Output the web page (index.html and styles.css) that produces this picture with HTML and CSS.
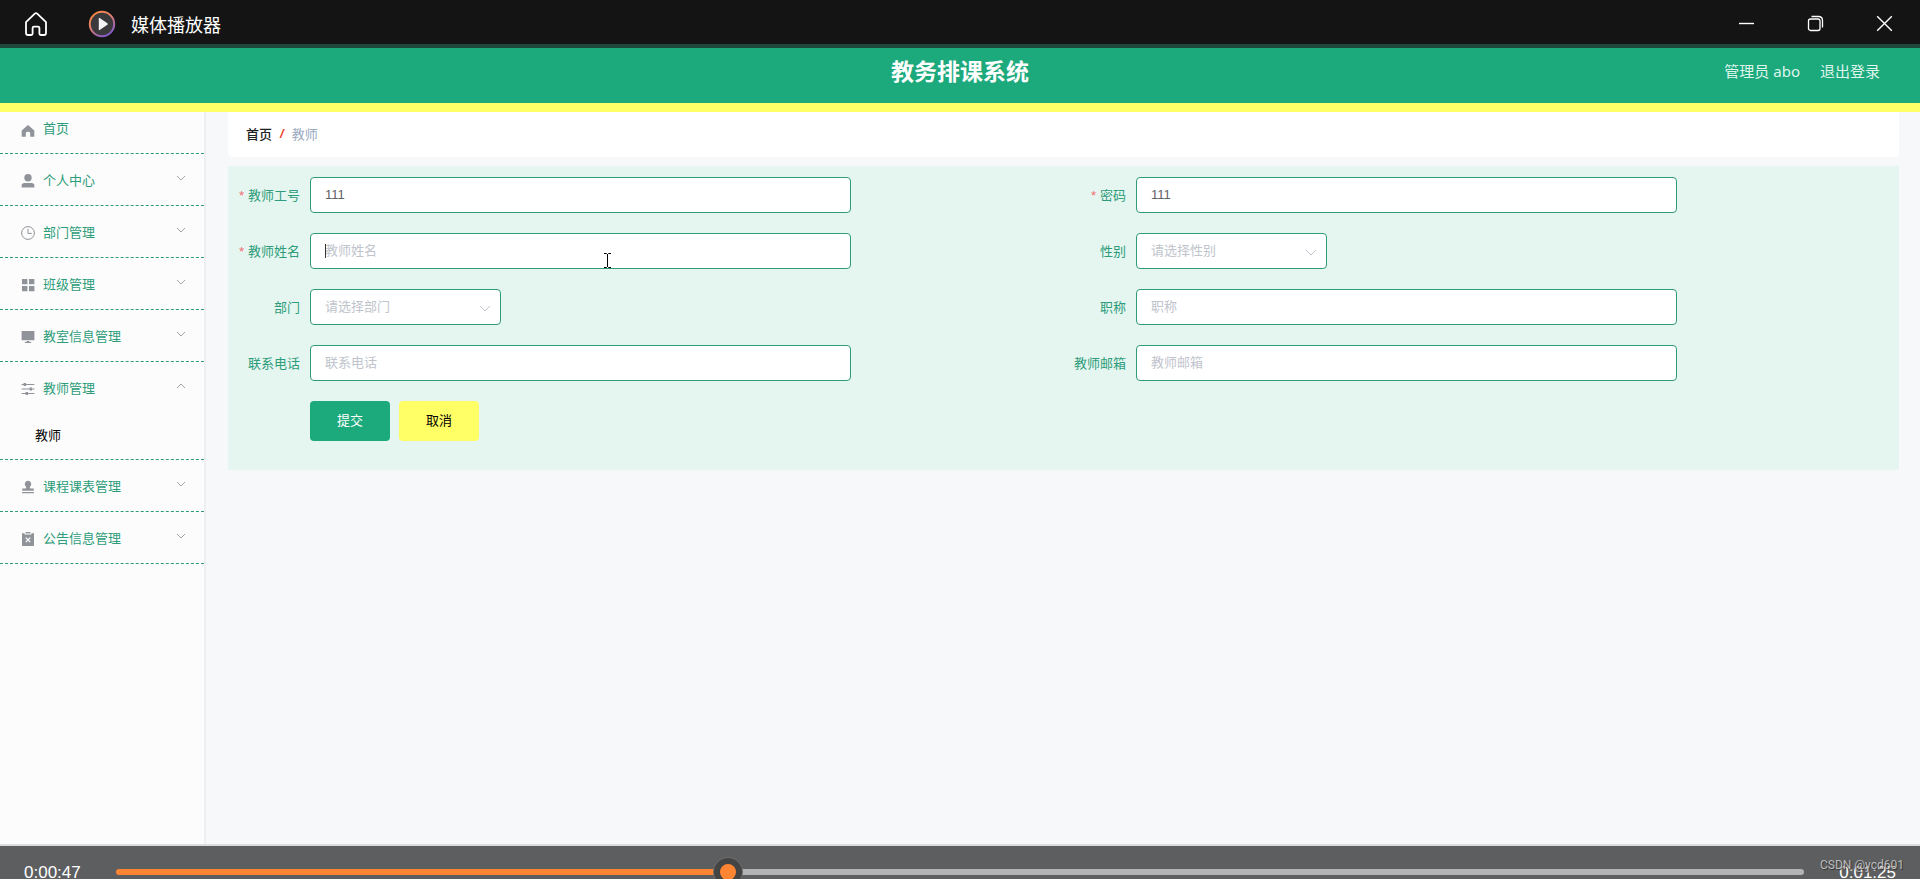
FILE: index.html
```html
<!DOCTYPE html>
<html lang="zh-CN">
<head>
<meta charset="utf-8">
<title>媒体播放器</title>
<link rel="stylesheet" href="styles.css">
</head>
<body>
<div class="window">
  <header class="titlebar">
    <button class="icon-btn home" aria-label="主页">
      <svg width="24" height="26" viewBox="0 0 24 26" fill="none" stroke="#fff" stroke-width="1.8" stroke-linejoin="round"><path d="M2 11.2 L10.8 2.6 Q12 1.6 13.2 2.6 L22 11.2 V22 Q22 24 20 24 H16.8 Q15.4 24 15.4 22.6 V17 Q15.4 15.6 14 15.6 H10 Q8.6 15.6 8.6 17 V22.6 Q8.6 24 7.2 24 H4 Q2 24 2 22 Z"/></svg>
    </button>
    <svg class="logo" width="28" height="28" viewBox="0 0 28 28"><defs><linearGradient id="ring" x1="0" y1="0" x2=".6" y2="1"><stop offset="0" stop-color="#ff8a35"/><stop offset=".5" stop-color="#e08070"/><stop offset="1" stop-color="#8a5cc8"/></linearGradient></defs><circle cx="14" cy="14" r="12.2" fill="#3a3a3c" stroke="url(#ring)" stroke-width="2"/><path d="M10.8 8.4 V19.6 Q10.8 20.4 11.6 20 L19.4 14.7 Q20.2 14 19.4 13.3 L11.6 8 Q10.8 7.6 10.8 8.4Z" fill="#f4f4f4"/></svg>
    <span class="app-name">媒体播放器</span>
    <div class="window-controls">
      <button class="icon-btn" aria-label="最小化"><svg width="17" height="17" viewBox="0 0 17 17" stroke="#fff" stroke-width="1.4"><path d="M1 8.5H16"/></svg></button>
      <button class="icon-btn" aria-label="还原"><svg width="17" height="17" viewBox="0 0 17 17" fill="none" stroke="#fff" stroke-width="1.3"><rect x="1.5" y="4" width="11.5" height="11.5" rx="2"/><path d="M4.5 1.5H11.5Q15.5 1.5 15.5 5.5V12.5"/></svg></button>
      <button class="icon-btn" aria-label="关闭"><svg width="17" height="17" viewBox="0 0 17 17" stroke="#fff" stroke-width="1.4"><path d="M1.2 1.2 15.8 15.8M15.8 1.2 1.2 15.8"/></svg></button>
    </div>
  </header>

  <div class="app-header">
    <h1 class="system-name">教务排课系统</h1>
    <nav class="account">
      <span>管理员 abo</span>
      <a href="#">退出登录</a>
    </nav>
  </div>

  <div class="body">
    <nav class="sidebar">
      <a class="menu-home" href="#"><svg class="menu-icon" viewBox="0 0 14 14"><path d="M7 1 L13.3 6.5 V12.8 H9.2 V9 Q9.2 7.8 7 7.8 Q4.8 7.8 4.8 9 V12.8 H.7 V6.5Z"/></svg>首页</a>
      <div class="menu-group"><button class="menu-item"><svg class="menu-icon" viewBox="0 0 14 14"><circle cx="7" cy="3.8" r="3.7"/><path d="M.6 13.6V11.6Q.6 9 3.4 9H10.6Q13.4 9 13.4 11.6V13.6Z"/></svg>个人中心<svg class="arrow" viewBox="0 0 10 6"><path d="M1 1 5 5 9 1"/></svg></button></div>
      <div class="menu-group"><button class="menu-item"><svg class="menu-icon line" viewBox="0 0 14 14"><circle cx="7" cy="7" r="6.4"/><path d="M7 2.8V7.4H10.8"/></svg>部门管理<svg class="arrow" viewBox="0 0 10 6"><path d="M1 1 5 5 9 1"/></svg></button></div>
      <div class="menu-group"><button class="menu-item"><svg class="menu-icon" viewBox="0 0 14 14"><path d="M1 1h5.4v5.2H1zM8 1h5.4v5.2H8zM1 8h5.4v5.2H1zM8 8h5.4v5.2H8z"/></svg>班级管理<svg class="arrow" viewBox="0 0 10 6"><path d="M1 1 5 5 9 1"/></svg></button></div>
      <div class="menu-group"><button class="menu-item"><svg class="menu-icon" viewBox="0 0 14 14"><path d="M.6 1h12.8v9.2H.6zM5.6 11h2.8v1h1.8v1.1H3.8V12h1.8z"/></svg>教室信息管理<svg class="arrow" viewBox="0 0 10 6"><path d="M1 1 5 5 9 1"/></svg></button></div>
      <div class="menu-group"><button class="menu-item" aria-expanded="true"><svg class="menu-icon line" viewBox="0 0 14 14"><path d="M.6 2.5H13.4M.6 7H13.4M.6 11.5H13.4"/><path stroke-width="2.4" d="M3.8 1V4M9.8 5.5V8.5M5.8 10V13"/></svg>教师管理<svg class="arrow" viewBox="0 0 10 6"><path d="M1 5 5 1 9 5"/></svg></button>
        <a class="submenu-item" href="#">教师</a></div>
      <div class="menu-group"><button class="menu-item"><svg class="menu-icon" viewBox="0 0 14 14"><path d="M7 .8a3.3 3.3 0 0 1 2 5.9Q8.400 7.600 9.400 8.400H12.800V10.800H1.200V8.400H4.600Q5.600 7.600 5 6.700A3.300 3.300 0 0 1 7 .8ZM1 12h12v1.200H1z"/></svg>课程课表管理<svg class="arrow" viewBox="0 0 10 6"><path d="M1 1 5 5 9 1"/></svg></button></div>
      <div class="menu-group"><button class="menu-item"><svg class="menu-icon" viewBox="0 0 14 14"><path d="M4.600 0h4.800v1.400H4.600z"/><path fill-rule="evenodd" d="M1 1.200H3.600V2.600H10.400V1.200H13V14H1ZM5.200 5.200 4.300 6.100 6.100 7.900 4.300 9.700 5.200 10.600 7 8.800 8.800 10.600 9.700 9.700 7.900 7.900 9.700 6.100 8.800 5.200 7 7Z"/></svg>公告信息管理<svg class="arrow" viewBox="0 0 10 6"><path d="M1 1 5 5 9 1"/></svg></button></div>
    </nav>

    <main class="content">
      <nav class="breadcrumb"><a href="#">首页</a><span class="sep">/</span><span class="current">教师</span></nav>
      <form class="form">
        <div class="field"><label class="required" for="no">教师工号</label><div class="control"><input id="no" type="text" value="111"></div></div>
        <div class="field"><label class="required" for="pw">密码</label><div class="control"><input id="pw" type="text" value="111"></div></div>
        <div class="field"><label class="required" for="name">教师姓名</label><div class="control"><input id="name" type="text" placeholder="教师姓名"><span class="caret"></span>
          <svg class="pointer" width="9" height="17" viewBox="0 0 9 17" fill="none" stroke="#000"><path d="M1 1.500H3.500L4.500 2.500 5.500 1.500H8M4.500 2V15M1 15.500H3.500L4.500 14.500 5.500 15.500H8"/></svg></div></div>
        <div class="field"><label for="sex">性别</label><div class="control short"><select id="sex"><option>请选择性别</option></select><svg class="select-arrow" viewBox="0 0 12 7"><path d="M1 1 6 6 11 1"/></svg></div></div>
        <div class="field"><label for="dept">部门</label><div class="control short"><select id="dept"><option>请选择部门</option></select><svg class="select-arrow" viewBox="0 0 12 7"><path d="M1 1 6 6 11 1"/></svg></div></div>
        <div class="field"><label for="title">职称</label><div class="control"><input id="title" type="text" placeholder="职称"></div></div>
        <div class="field"><label for="tel">联系电话</label><div class="control"><input id="tel" type="text" placeholder="联系电话"></div></div>
        <div class="field"><label for="mail">教师邮箱</label><div class="control"><input id="mail" type="text" placeholder="教师邮箱"></div></div>
        <div class="actions"><button class="btn submit" type="button">提交</button><button class="btn cancel" type="button">取消</button></div>
      </form>
    </main>
  </div>

  <div class="player">
    <span class="time">0:00:47</span>
    <input class="seek" type="range" min="0" max="100" value="36" aria-label="播放进度">
    <span class="time total">0:01:25</span>
  </div>
  <span class="watermark">CSDN @ycd601</span>
</div>
</body>
</html>
```
FILE: styles.css
```css
* { box-sizing: border-box; }

body {
  margin: 0;
  font-family: "Liberation Sans", "Noto Sans CJK SC", sans-serif;
  font-size: 13px;
  color: #2d9c7a;
}

a { color: inherit; text-decoration: none; }

button, input, select { font: inherit; }

button { border: 0; padding: 0; background: none; color: inherit; cursor: pointer; }

.window {
  position: relative;
  display: flex;
  flex-direction: column;
  height: 100vh;
  overflow: hidden;
  background: #f6f8fa;
}

/* Title bar */
.titlebar {
  display: flex;
  align-items: center;
  flex: none;
  height: 48px;
  padding: 0 27px 0 24px;
  background: #141414;
  border-bottom: 4px solid #1e463b;
  color: #fff;
}

.icon-btn { display: flex; }

.home { margin-top: 3px; }

.logo { margin: 4px 0 0 40px; }

.app-name { margin: 4px 0 0 15px; font-size: 18px; }

.window-controls { display: flex; gap: 52px; margin: 3px 0 0 auto; }

/* Application header */
.app-header {
  display: grid;
  grid-template-columns: 1fr auto 1fr;
  align-items: center;
  flex: none;
  height: 64px;
  padding: 0 40px 7px;
  background: #1ca97c;
  border-bottom: 9px solid #ffff66;
  color: #fff;
}

.system-name { grid-column: 2; margin: 0; font-size: 23px; line-height: 32px; }

.account {
  display: flex;
  justify-content: flex-end;
  gap: 20px;
  padding-bottom: 2px;
  font-family: "Noto Sans", "Noto Sans CJK SC", sans-serif;
  font-size: 15px;
  line-height: 20px;
  color: #dff5ec;
}

.body { display: flex; flex: 1; min-height: 0; }

/* Sidebar */
.sidebar {
  flex: none;
  width: 206px;
  background: #fcfcfc;
  border-right: 2px solid #eeeff0;
}

.menu-home, .menu-group { border-bottom: 1px dashed #2d9c7a; }

.menu-home, .menu-item {
  display: flex;
  align-items: center;
  width: 100%;
  padding: 3px 18px 0 21px;
  line-height: 48px;
}

.menu-home { padding-top: 0; padding-bottom: 8px; line-height: 33px; }

.menu-home .menu-icon { margin-top: 4px; }

.menu-icon { flex: none; width: 14px; height: 14px; margin-right: 8px; fill: #909399; }

.menu-icon.line { fill: none; stroke: #909399; stroke-width: 1; }

.arrow {
  width: 10px;
  height: 6px;
  margin: 0 0 7px auto;
  fill: none;
  stroke: #a0a3a8;
}

.submenu-item { display: block; padding-left: 35px; line-height: 46px; color: #000; }

/* Content */
.content { flex: 1; padding: 0 21px 0 22px; }

.breadcrumb {
  display: flex;
  align-items: center;
  gap: 8px;
  height: 45px;
  padding: 0 18px 2px;
  background: #fff;
  border-radius: 0 0 4px 4px;
  color: #97a8be;
}

.breadcrumb a { color: #222; font-weight: 500; }

.sep { color: #e8432e; font-style: italic; font-weight: 700; }

.form {
  display: grid;
  grid-template-columns: 1fr 1fr;
  row-gap: 20px;
  margin-top: 9px;
  padding: 11px 19px 29px 0;
  background: #e5f6f0;
}

.field { display: flex; align-items: center; }

.field label { flex: none; width: 82px; padding: 0 10px 2px 0; text-align: right; }

.required::before { content: "*"; margin-right: 4px; color: #f56c6c; }

.control { position: relative; flex: 1; max-width: 541px; }

.control.short { max-width: 191px; }

.control input, .control select {
  display: block;
  width: 100%;
  height: 36px;
  padding: 0 14px 2px;
  border: 1px solid #2d9c7a;
  border-radius: 4px;
  background: #fff;
  color: #606266;
  outline: 0;
}

.control select { appearance: none; color: #c0c4cc; }

.control input::placeholder { color: #c0c4cc; }

.select-arrow {
  position: absolute;
  top: 16px;
  right: 10px;
  width: 12px;
  height: 7px;
  fill: none;
  stroke: #c0c4cc;
  pointer-events: none;
}

.caret { position: absolute; top: 11px; left: 15px; width: 1px; height: 14px; background: #333; }

.pointer { position: absolute; top: 19px; left: 293px; }

.actions { grid-column: 1 / -1; display: flex; gap: 9px; padding-left: 82px; }

.btn { width: 80px; height: 40px; padding-bottom: 3px; border-radius: 4px; }

.submit { background: #1ca97c; color: #fff; }

.cancel { background: #ffff66; color: #000; }

/* Player overlay */
.player {
  position: absolute;
  right: 0;
  bottom: -18px;
  left: 0;
  display: flex;
  align-items: center;
  height: 53px;
  padding: 0 24px;
  border-top: 2px solid #dcdddf;
  background: #5d5e60;
  color: #fff;
  font-size: 17px;
}

.time { flex: none; width: 92px; padding-top: 2px; }

.total { text-align: right; }

.seek {
  flex: 1;
  min-width: 0;
  height: 6px;
  margin: 0;
  appearance: none;
  border-radius: 3px;
  background: linear-gradient(to right, #ff8533 36%, #b2b3b4 36%);
}

.seek::-webkit-slider-thumb {
  appearance: none;
  width: 28px;
  height: 28px;
  border: 6px solid #444;
  border-radius: 50%;
  background: #ff8533;
  box-shadow: 0 0 0 1px #6c6d6f;
}

.watermark {
  position: absolute;
  right: 16px;
  bottom: 6px;
  font-family: Roboto, sans-serif;
  font-size: 12px;
  line-height: 16px;
  color: #bbbcbd;
  text-shadow: 1px 1px 1px #333;
}
```
